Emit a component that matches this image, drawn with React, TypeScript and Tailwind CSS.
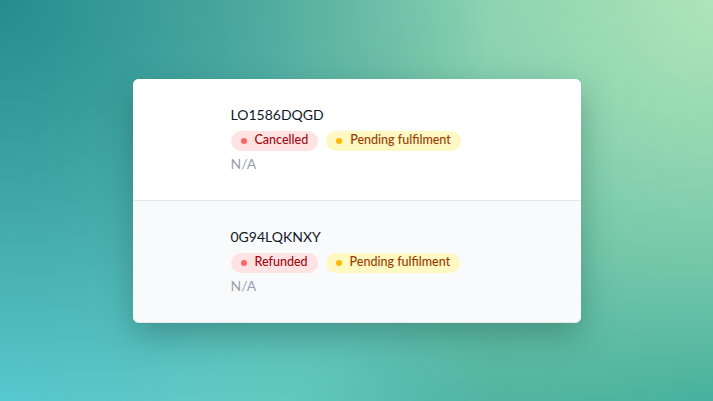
import React from 'react';

interface Order {
  id: string;
  payment: string;
  fulfilment: string;
  customer: string;
}

const orders: Order[] = [
  { id: 'LO1586DQGD', payment: 'Cancelled', fulfilment: 'Pending fulfilment', customer: 'N/A' },
  { id: '0G94LQKNXY', payment: 'Refunded', fulfilment: 'Pending fulfilment', customer: 'N/A' },
];

const App: React.FC = () => {
  return (
    <div
      className="w-full h-[401px] flex items-center justify-center overflow-hidden bg-[#6fc3ab] bg-[radial-gradient(circle_at_0%_0%,#268c8e_0%,rgba(38,140,142,0)_60%),radial-gradient(circle_at_100%_0%,#aee5b8_0%,rgba(174,229,184,0)_60%),radial-gradient(circle_at_0%_100%,#62d6de_0%,rgba(98,214,222,0)_60%),radial-gradient(circle_at_100%_100%,#30a597_0%,rgba(48,165,151,0)_65%)]"
      style={{ fontFamily: 'Lato, "Noto Sans", sans-serif' }}
    >
      {/* Card */}
      <div className="w-[448px] rounded-md overflow-hidden bg-white shadow-[0_12px_32px_rgba(20,70,60,0.35)] border-b border-gray-200">
        {orders.map((o, i) => (
          <div
            key={o.id}
            className={`pl-[98px] pt-[26px] pb-[26px] ${i === 0 ? 'bg-white border-b border-gray-200' : 'bg-gray-50'}`}
          >
            <p className="text-sm leading-5 text-gray-900">{o.id}</p>
            <div className="flex items-center gap-2 mt-1.5">
              <span className="inline-flex items-center gap-2 h-5 px-2.5 rounded-full bg-red-100 text-red-800 text-[12.5px] font-medium">
                <span className="w-1.5 h-1.5 rounded-full bg-red-400" />
                {o.payment}
              </span>
              <span className="inline-flex items-center gap-2 h-5 px-2.5 rounded-full bg-yellow-100 text-amber-800 text-[12.5px] font-medium">
                <span className="w-1.5 h-1.5 rounded-full bg-amber-400" />
                {o.fulfilment}
              </span>
            </div>
            <p className="mt-[3px] text-sm leading-5 text-gray-400">{o.customer}</p>
          </div>
        ))}
      </div>
    </div>
  );
};

export default App;
